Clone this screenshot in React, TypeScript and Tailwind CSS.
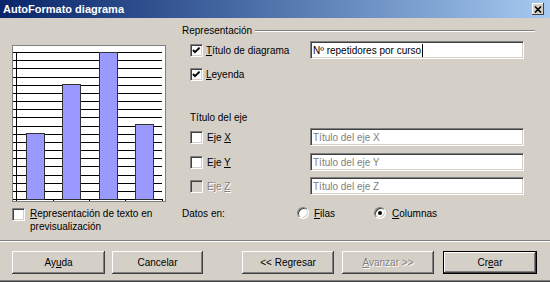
import type { ReactNode } from 'react'

const bars = [
  { x: 14, top: 88 },
  { x: 50, top: 39 },
  { x: 87, top: 7 },
  { x: 123, top: 79 },
]

function Check({ checked, disabled }: { checked?: boolean; disabled?: boolean }) {
  return (
    <span
      className={`relative inline-block h-[13px] w-[13px] shrink-0 border border-t-[#808080] border-l-[#808080] border-b-white border-r-white shadow-[inset_1px_1px_0_#404040,inset_-1px_-1px_0_#d4d0c8] ${
        disabled ? 'bg-[#d4d0c8]' : 'bg-white'
      }`}
    >
      {checked && (
        <svg className="absolute inset-0" width="11" height="11" viewBox="0 0 11 11">
          <path d="M2 5 L4 7.2 L8.6 2.6" fill="none" stroke="#000" strokeWidth="1.9" />
        </svg>
      )}
    </span>
  )
}

function Radio({ checked }: { checked?: boolean }) {
  return (
    <span className="flex h-[12px] w-[12px] shrink-0 items-center justify-center rounded-full border border-t-[#808080] border-l-[#808080] border-b-white border-r-white bg-white shadow-[inset_1px_1px_0_#404040,inset_-1px_-1px_0_#d4d0c8]">
      {checked && <span className="h-[4px] w-[4px] rounded-full bg-black" />}
    </span>
  )
}

function Field({ children }: { children: ReactNode }) {
  return (
    <div className="flex h-[18px] w-[214px] items-center border border-t-[#808080] border-l-[#808080] border-b-white border-r-white bg-white pl-[2px] shadow-[inset_1px_1px_0_#404040,inset_-1px_-1px_0_#d4d0c8]">
      {children}
    </div>
  )
}

function Btn({ children, w, def, disabled }: { children: ReactNode; w: string; def?: boolean; disabled?: boolean }) {
  return (
    <div
      className={`flex h-[23px] items-center justify-center bg-[#d4d0c8] ${w} ${
        def
          ? 'border border-black shadow-[inset_-1px_-1px_0_#404040,inset_1px_1px_0_#fff,inset_-2px_-2px_0_#808080]'
          : 'shadow-[inset_-1px_-1px_0_#404040,inset_1px_1px_0_#fff,inset_-2px_-2px_0_#808080,inset_2px_2px_0_#d4d0c8]'
      } ${disabled ? 'text-[#808080] [text-shadow:1px_1px_0_#fff]' : 'text-black'}`}
    >
      {children}
    </div>
  )
}

function Chart() {
  const lines = Array.from({ length: 19 }, (_, i) => Math.round(7 + (i * 147) / 18) + 0.5)
  return (
    <div className="h-[157px] w-[154px] border border-[#808080] bg-white">
      <svg width="152" height="155" viewBox="1 1 152 155" shapeRendering="crispEdges">
        {lines.map((y) => (
          <line key={y} x1="1" x2="150" y1={y} y2={y} stroke="#000" />
        ))}
        <line x1="4.5" x2="4.5" y1="7" y2="155" stroke="#000" />
        {[4.5, 41.5, 77.5, 113.5, 150.5].map((x) => (
          <line key={x} x1={x} x2={x} y1="154" y2="157" stroke="#000" />
        ))}
        {bars.map((b) => (
          <rect key={b.x} x={b.x + 0.5} y={b.top + 0.5} width="18" height={154 - b.top} fill="#9999ff" stroke="#333" />
        ))}
      </svg>
    </div>
  )
}

export default function App() {
  return (
    <div className="flex h-[282px] w-[550px] flex-col bg-[#d4d0c8] font-['Liberation_Sans',Arial,sans-serif] text-[10px] text-black">
      <div className="flex h-[18px] items-center bg-linear-to-r from-[#0a246a] to-[#a6caf0] pl-[3px] pr-[6px]">
        <span className="flex-1 text-[11px] font-bold text-white">AutoFormato diagrama</span>
        <span className="flex h-[12px] w-[12px] items-center justify-center bg-[#d4d0c8] shadow-[inset_-1px_-1px_0_#404040,inset_1px_1px_0_#fff]">
          <svg width="8" height="7" viewBox="0 0 8 7">
            <path d="M1 0.5 L7 6.5 M7 0.5 L1 6.5" stroke="#000" strokeWidth="1.6" />
          </svg>
        </span>
      </div>

      <div className="flex h-[222px]">
        <div className="flex w-[182px] flex-col pl-[12px]">
          <div className="mt-[27px]">
            <Chart />
          </div>
          <div className="mt-[5px] flex items-start">
            <span className="mt-[1px]">
              <Check />
            </span>
            <span className="ml-[5px] leading-[13px]">
              <span className="underline">R</span>epresentación de texto en
              <br />
              previsualización
            </span>
          </div>
        </div>

        <div className="flex flex-1 flex-col">
          <div className="mt-[6px] flex h-[13px] items-center">
            <span>Representación</span>
            <span className="ml-[3px] mr-[15px] h-[2px] flex-1 border-t border-b border-t-[#808080] border-b-white" />
          </div>

          <div className="mt-[4px] flex h-[18px] items-center pl-[8px]">
            <div className="flex w-[120px] items-center">
              <Check checked />
              <span className="ml-[3px]">
                <span className="underline">T</span>ítulo de diagrama
              </span>
            </div>
            <Field>
              <span>Nº repetidores por curso</span>
              <span className="ml-[1px] h-[13px] w-[1px] bg-black" />
            </Field>
          </div>

          <div className="mt-[6px] flex h-[18px] items-center pl-[8px]">
            <Check checked />
            <span className="ml-[3px]">
              <span className="underline">L</span>eyenda
            </span>
          </div>

          <div className="mt-[28px] flex h-[13px] items-center pl-[8px]">Título del eje</div>

          {[
            { k: 'X', mt: 'mt-[4px]' },
            { k: 'Y', mt: 'mt-[7px]' },
            { k: 'Z', mt: 'mt-[6px]', off: true },
          ].map((r) => (
            <div key={r.k} className={`${r.mt} flex h-[18px] items-center pl-[8px]`}>
              <div className="flex w-[120px] items-center">
                <Check disabled={r.off} />
                <span className={`ml-[4px] ${r.off ? 'text-[#808080] [text-shadow:1px_1px_0_#fff]' : ''}`}>
                  Eje <span className="underline">{r.k}</span>
                </span>
              </div>
              <Field>
                <span className="text-[#808080]">Título del eje {r.k}</span>
              </Field>
            </div>
          ))}

          <div className="mt-[11px] flex h-[14px] items-center">
            <span className="w-[115px]">Datos en:</span>
            <Radio />
            <span className="ml-[5px] w-[60px]">
              <span className="underline">F</span>ilas
            </span>
            <Radio checked />
            <span className="ml-[6px]">
              <span className="underline">C</span>olumnas
            </span>
          </div>
        </div>
      </div>

      <div className="h-[2px] border-t border-b border-t-[#808080] border-b-white" />

      <div className="mt-[9px] flex h-[23px] items-center">
        <div className="ml-[12px]">
          <Btn w="w-[93px]">
            <span>
              Ay<span className="underline">u</span>da
            </span>
          </Btn>
        </div>
        <div className="ml-[7px]">
          <Btn w="w-[91px]">Cancelar</Btn>
        </div>
        <div className="ml-[39px]">
          <Btn w="w-[92px]">&lt;&lt; Regresar</Btn>
        </div>
        <div className="ml-[8px]">
          <Btn w="w-[92px]" disabled>
            <span>
              <span className="underline">A</span>vanzar &gt;&gt;
            </span>
          </Btn>
        </div>
        <div className="ml-[9px]">
          <Btn w="w-[94px]" def>
            <span>
              Cr<span className="underline">e</span>ar
            </span>
          </Btn>
        </div>
      </div>

      <div className="flex-1" />
      <div className="h-[2px] border-t border-b border-t-[#808080] border-b-[#404040]" />
    </div>
  )
}
